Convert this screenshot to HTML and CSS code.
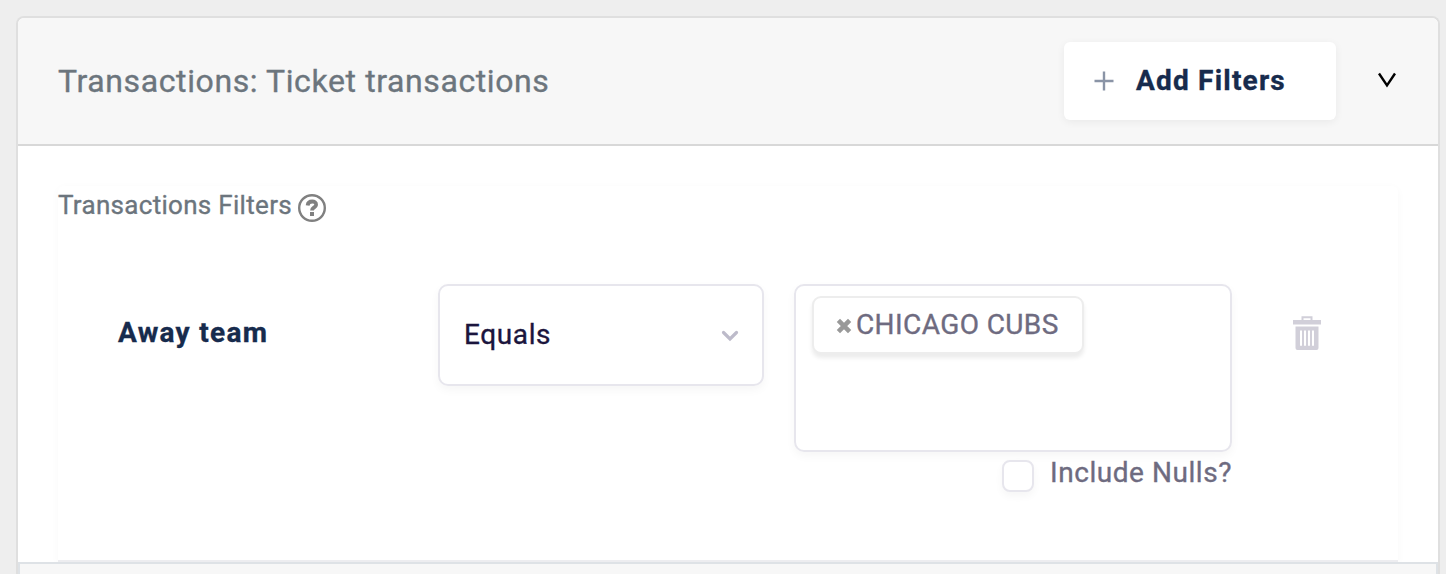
FILE: index.html
```html
<!DOCTYPE html>
<html lang="en">
<head>
  <meta charset="utf-8">
  <title>Transactions</title>
  <link rel="stylesheet" href="styles.css">
</head>
<body>
  <div class="card">
    <div class="card-header">
      <h2 class="card-title">Transactions: Ticket transactions</h2>
      <button class="add-btn">
        <svg class="plus" width="20" height="20" viewBox="0 0 20 20"><path d="M10 .5v19M.5 10h19" stroke="#8a94a6" stroke-width="2.4" fill="none"/></svg>
        <span>Add Filters</span>
      </button>
      <svg class="toggle" width="20" height="16" viewBox="0 0 20 16"><path d="M2 1.5L10 13.4L18 1.5" stroke="#000" stroke-width="2.4" fill="none"/></svg>
    </div>
    <div class="card-body">
      <div class="filters">
        <div class="filters-title">
          <span>Transactions Filters</span>
          <svg width="28" height="28" viewBox="0 0 28 28"><circle cx="14" cy="14" r="12.8" stroke="#808080" stroke-width="2.4" fill="none"/><path d="M9.6 11.4C10.3 6 18.4 6.6 18.1 10.8C17.9 13.4 14 13.4 14 16.4" stroke="#808080" stroke-width="3.8" fill="none"/><path d="M12 18h4v4h-4z" fill="#808080"/></svg>
        </div>
        <div class="filter-row">
          <div class="filter-name">Away team</div>
          <div class="select">
            <span>Equals</span>
            <svg width="18" height="12" viewBox="0 0 18 12"><path d="M2.5 2.5L9 9L15.5 2.5" stroke="#bdbbca" stroke-width="3.2" stroke-linecap="round" fill="none"/></svg>
          </div>
          <div class="filter-value">
            <div class="tags">
              <div class="tag">
                <svg width="16" height="16" viewBox="0 0 16 16"><path d="M2.4 2.4l11.2 11.2M13.6 2.4L2.4 13.6" stroke="#999" stroke-width="4.6" fill="none"/></svg>
                <span>CHICAGO CUBS</span>
              </div>
            </div>
            <label class="nulls">
              <span class="checkbox"></span>
              <span class="nulls-text">Include Nulls?</span>
            </label>
          </div>
          <svg class="trash" width="28" height="35" viewBox="0 0 28 35"><path d="M9.5 4V1.2h9V4" stroke="#d1cfd9" stroke-width="2" fill="none"/><path d="M0 4h28v4.6H0zM2.5 10.6h23V32a2 2 0 0 1-2 2h-19a2 2 0 0 1-2-2z" fill="#d1cfd9"/><path d="M8 14.6v15.2M12 14.6v15.2M16 14.6v15.2M20 14.6v15.2" stroke="#fff" stroke-width="2"/></svg>
        </div>
      </div>
    </div>
    <div class="next-panel"></div>
  </div>
</body>
</html>
```
FILE: styles.css
```css
* {
  box-sizing: border-box;
}
body {
  margin: 0;
  height: 574px;
  padding: 16px 6px 0 16px;
  background: #eee;
  font-family: Roboto, sans-serif;
  white-space: nowrap;
  -webkit-text-stroke: 0.35px;
}
.card {
  height: 558px;
  background: #fff;
  border: 2px solid #dfdfdf;
  border-bottom: none;
  border-radius: 8px 8px 0 0;
}
.card-header {
  display: flex;
  align-items: center;
  height: 128px;
  padding: 0 40px;
  background: #f7f7f7;
  border-bottom: 2px solid #d8d8d8;
  border-radius: 6px 6px 0 0;
}
.card-title {
  margin: 0;
  flex: 1;
  font-size: 32px;
  font-weight: 400;
  line-height: 40px;
  color: #6c757d;
  letter-spacing: 0.6px;
}
.add-btn {
  display: flex;
  align-items: center;
  width: 272px;
  height: 78px;
  padding: 0 30px 2px;
  border: none;
  border-radius: 6px;
  background: #fff;
  box-shadow: 0 2px 8px rgba(0, 0, 0, 0.06);
  font-family: inherit;
  font-size: 28px;
  font-weight: 700;
  color: #172b4d;
  letter-spacing: 1.2px;
}
.plus {
  margin: 2px 22px 0 0;
}
.toggle {
  margin: 0 1px 2px 41px;
}
.card-body {
  height: 416px;
  padding: 40px 40px 0;
}
.filters {
  height: 376px;
  border-bottom: 2px solid #ededf0;
  border-radius: 6px 6px 0 0;
  box-shadow: 0 2px 8px rgba(0, 0, 0, 0.03);
}
.filters-title {
  display: flex;
  height: 98px;
  padding-top: 3px;
  font-size: 26px;
  line-height: 32px;
  color: #6c757d;
  letter-spacing: 0.3px;
}
.filters-title svg {
  margin: 5px 0 0 6px;
}
.filter-row {
  display: flex;
  align-items: flex-start;
  padding-left: 60px;
}
.filter-name {
  width: 320px;
  padding-top: 33px;
  font-size: 28px;
  font-weight: 700;
  line-height: 32px;
  color: #172b4d;
  letter-spacing: 1.3px;
}
.select {
  display: flex;
  align-items: center;
  justify-content: space-between;
  width: 326px;
  height: 102px;
  padding: 0 23px 2px 24px;
  border: 2px solid #e7e6ed;
  border-radius: 10px;
  box-shadow: 0 4px 10px rgba(0, 0, 0, 0.04);
  font-size: 28px;
  color: #1b153d;
  letter-spacing: 0.6px;
}
.select svg {
  margin-top: 4px;
}
.filter-value {
  width: 438px;
  margin-left: 30px;
}
.tags {
  height: 168px;
  padding: 10px 16px;
  border: 2px solid #e7e6ed;
  border-radius: 10px;
  box-shadow: 0 4px 10px rgba(0, 0, 0, 0.04);
}
.tag {
  display: flex;
  align-items: center;
  width: 272px;
  height: 58px;
  padding: 0 0 2px 22px;
  border: 2px solid #ededed;
  border-radius: 9px;
  background: #fff;
  box-shadow: 0 4px 4px rgba(0, 0, 0, 0.08);
  font-size: 28px;
  color: #6e6b80;
  letter-spacing: 0.4px;
}
.tag svg {
  margin: 3px 4px 0 0;
}
.nulls {
  display: flex;
  justify-content: flex-end;
  padding-top: 8px;
  font-size: 28px;
  color: #6e6b80;
  letter-spacing: 0.55px;
}
.checkbox {
  width: 32px;
  height: 32px;
  margin-right: 16px;
  border: 2px solid #e7e6ed;
  border-radius: 8px;
  background: #fff;
  box-shadow: 0 4px 8px rgba(0, 0, 0, 0.04);
}
.nulls-text {
  line-height: 26px;
}
.trash {
  margin: 32px 0 0 61px;
}
.next-panel {
  height: 12px;
  border: 2px solid #dee2e6;
  border-bottom: none;
  background: #f7f7f7;
}
```
